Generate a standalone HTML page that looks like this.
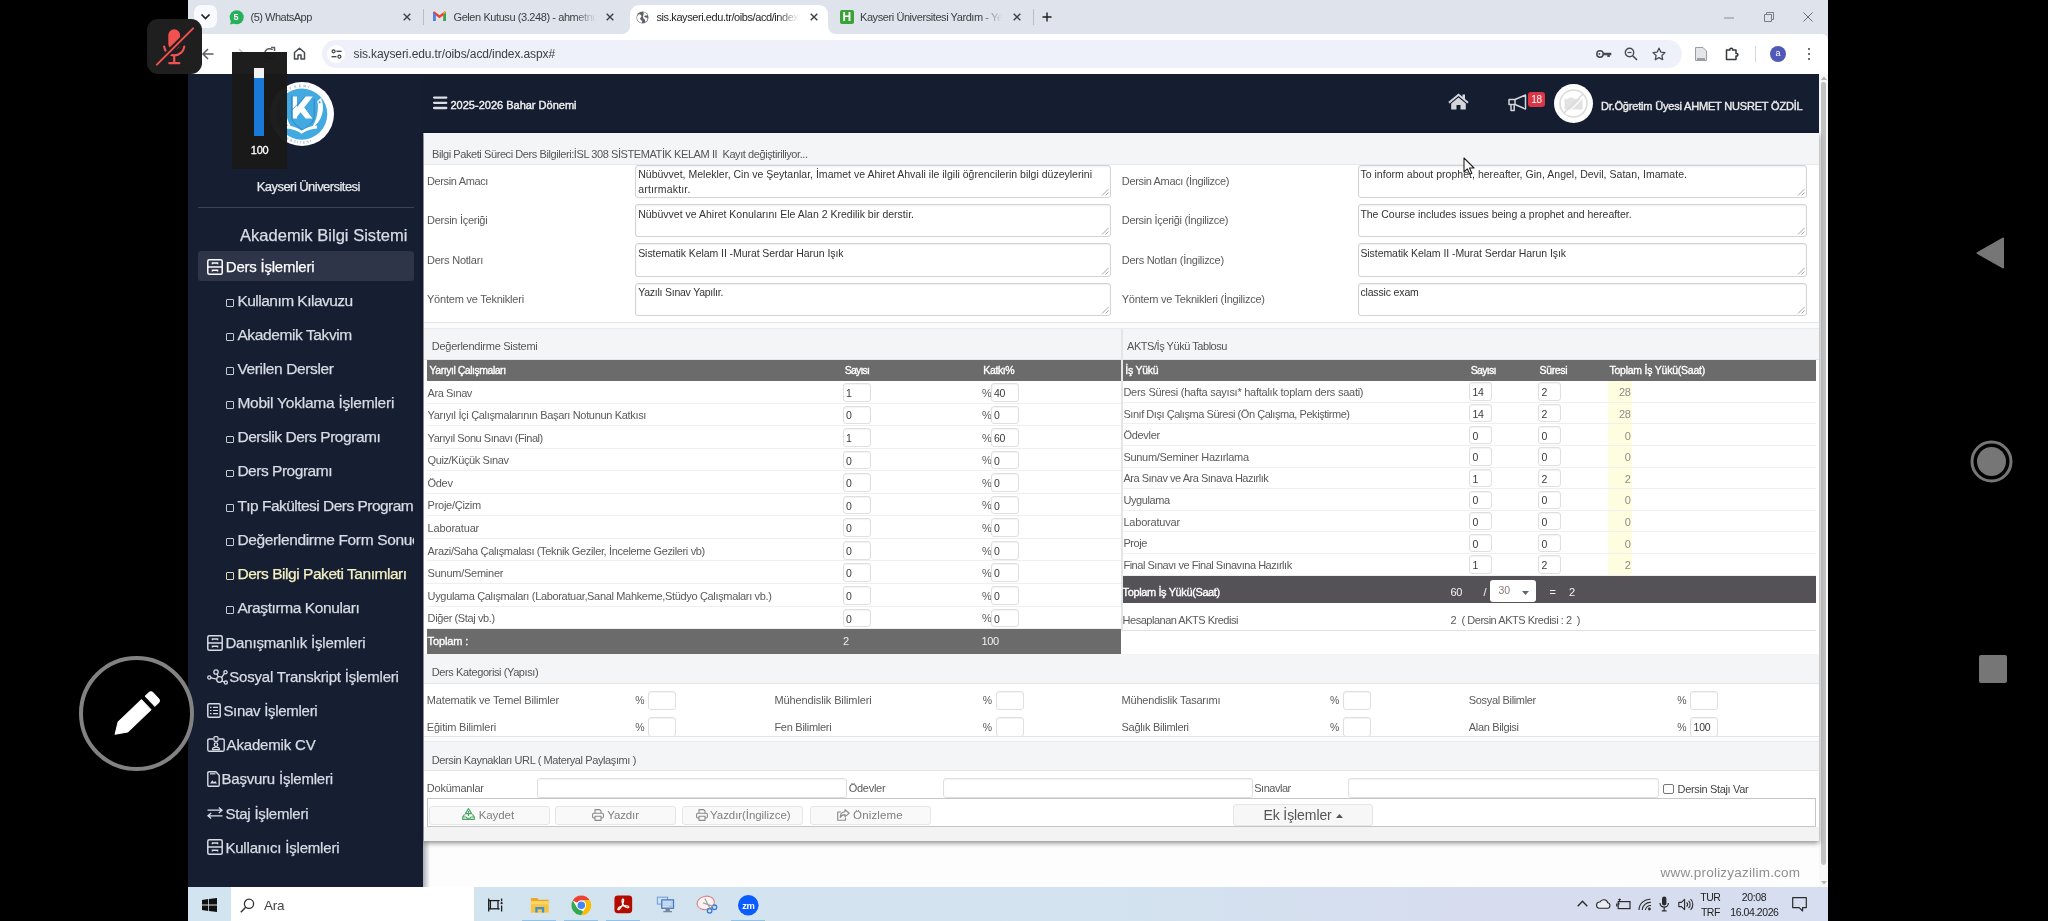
<!DOCTYPE html>
<html lang="tr"><head><meta charset="utf-8"><title>sis.kayseri.edu.tr/oibs/acd/index.aspx</title>
<style>
html,body{margin:0;padding:0;background:#000;}
body{width:2048px;height:921px;position:relative;overflow:hidden;font-family:'Liberation Sans',sans-serif;}
.t{position:absolute;white-space:pre;}
.sb{-webkit-text-stroke:0.25px currentColor;}
.b{position:absolute;box-sizing:border-box;}
svg{position:absolute;overflow:visible;}
.inp{position:absolute;box-sizing:border-box;background:#fff;border:1px solid #dfdfdf;border-radius:3px;box-shadow:inset 0 1px 1px rgba(0,0,0,.05);}
.ta{position:absolute;box-sizing:border-box;background:#fff;border:1px solid #d3d3d3;border-radius:3px;box-shadow:inset 0 1px 2px rgba(0,0,0,.07);}
.btn{position:absolute;box-sizing:border-box;background:#f9f9f9;border:1px solid #e6e6e6;border-radius:3px;}
#root{position:absolute;left:0;top:0;width:2048px;height:921px;will-change:transform;}
</style></head><body><div id="root">
<div class="b" style="left:188px;top:0px;width:1640px;height:44px;background:#dfe3ec;"></div><div class="b" style="left:188px;top:34px;width:1640px;height:40px;background:#ffffff;border-radius:0 6px 0 0;"></div><div class="b" style="left:194px;top:5px;width:23px;height:23px;background:#f9fafd;border-radius:7px;"></div><svg style="left:200px;top:12px" width="11" height="9" viewBox="0 0 11 9"><path d="M1.5 2.5 L5.5 6.5 L9.5 2.5" fill="none" stroke="#1f1f1f" stroke-width="1.7"/></svg><div class="b" style="left:630px;top:5px;width:198px;height:29.2px;background:#fff;border-radius:9px 9px 0 0;"></div><svg style="left:622px;top:26px" width="8" height="8" viewBox="0 0 8 8"><path d="M8 0 V8 H0 A8 8 0 0 0 8 0Z" fill="#fff"/></svg><svg style="left:828px;top:26px" width="8" height="8" viewBox="0 0 8 8"><path d="M0 0 V8 H8 A8 8 0 0 1 0 0Z" fill="#fff"/></svg><svg style="left:229px;top:10px" width="15" height="15" viewBox="0 0 15 15"><circle cx="7.7" cy="7.2" r="7" fill="#25b15a"/><path d="M1 14.6 L2.2 10.5 L5.2 13.5Z" fill="#25b15a"/></svg><span class="t" style="top:11.0px;font-size:9px;line-height:13px;color:#fff;font-weight:700;left:233.5px;">5</span><span class="t" style="top:10.0px;font-size:11px;line-height:15px;color:#3c4043;letter-spacing:-0.496px;left:250.5px;">(5) WhatsApp</span><svg style="left:403px;top:13px" width="8" height="8" viewBox="0 0 8 8"><path d="M0.7 0.7 L7.3 7.3 M7.3 0.7 L0.7 7.3" stroke="#3c4043" stroke-width="1.4" fill="none"/></svg><div class="b" style="left:423px;top:9px;width:1px;height:16px;background:#b9bdc7;"></div><svg style="left:433px;top:11px" width="13" height="11" viewBox="0 0 13 11"><path d="M0 1.2 V10 H2.6 V4.2 L6.5 7.2 L10.4 4.2 V10 H13 V1.2 L11.8 0.3 L6.5 4.3 L1.2 0.3Z" fill="#ea4335"/><path d="M0 1.2 V10 H2.6 V3.2Z" fill="#4285f4"/><path d="M13 1.2 V10 H10.4 V3.2Z" fill="#34a853"/><path d="M10.4 3.2 L13 1.2 L11.8 0.3 L10.4 1.4Z" fill="#fbbc04"/></svg><span class="t" style="top:10.0px;font-size:11px;line-height:15px;color:#3c4043;letter-spacing:-0.42px;left:453.5px;width:142px;overflow:hidden;-webkit-mask-image:linear-gradient(90deg,#000 85%,transparent);">Gelen Kutusu (3.248) - ahmetnu</span><svg style="left:606px;top:13px" width="8" height="8" viewBox="0 0 8 8"><path d="M0.7 0.7 L7.3 7.3 M7.3 0.7 L0.7 7.3" stroke="#3c4043" stroke-width="1.4" fill="none"/></svg><svg style="left:636px;top:11px" width="13" height="13" viewBox="0 0 13 13"><circle cx="6.5" cy="6.5" r="6" fill="#5f6368"/><path d="M2.5 3.5 C4 2.5 5.5 4 5.5 5.2 C5.5 6.5 3.8 6.5 4.2 8 C4.6 9.3 6 9 6.2 10.5 L5.5 12 C3.2 11.5 1.2 9.5 1 7 C1 5.5 1.6 4.3 2.5 3.5Z M7.5 1 C9.5 1.5 10.8 2.6 11.5 4.2 C10.5 4.8 9.2 4.2 8.5 4.8 C7.8 5.4 8.6 6.6 9.8 6.6 C10.6 6.6 11.4 7.2 11.6 8 C11.2 9.3 10.4 10.3 9.3 11 C8.8 10.2 9.3 9 8.5 8.3 C7.5 7.4 6.8 6.5 7 5.2 C7.2 4 8.2 3.2 7.5 1Z" fill="#fff"/></svg><span class="t" style="top:10.0px;font-size:11px;line-height:15px;color:#1f1f1f;letter-spacing:-0.42px;left:656.5px;width:142px;overflow:hidden;-webkit-mask-image:linear-gradient(90deg,#000 85%,transparent);">sis.kayseri.edu.tr/oibs/acd/indexa</span><svg style="left:810px;top:13px" width="8" height="8" viewBox="0 0 8 8"><path d="M0.7 0.7 L7.3 7.3 M7.3 0.7 L0.7 7.3" stroke="#3c4043" stroke-width="1.4" fill="none"/></svg><div class="b" style="left:840px;top:10px;width:14px;height:14px;background:#3aa335;border-radius:2px;"></div><span class="t" style="top:9.0px;font-size:12px;line-height:17px;color:#fff;font-weight:700;left:842.5px;">H</span><span class="t" style="top:10.0px;font-size:11px;line-height:15px;color:#3c4043;letter-spacing:-0.42px;left:860px;width:142px;overflow:hidden;-webkit-mask-image:linear-gradient(90deg,#000 85%,transparent);">Kayseri Üniversitesi Yardım - Yen</span><svg style="left:1013px;top:13px" width="8" height="8" viewBox="0 0 8 8"><path d="M0.7 0.7 L7.3 7.3 M7.3 0.7 L0.7 7.3" stroke="#3c4043" stroke-width="1.4" fill="none"/></svg><div class="b" style="left:1033px;top:9px;width:1px;height:16px;background:#b9bdc7;"></div><svg style="left:1042px;top:12px" width="10" height="10" viewBox="0 0 10 10"><path d="M5 0.5 V9.5 M0.5 5 H9.5" stroke="#1f1f1f" stroke-width="1.4"/></svg><svg style="left:1724px;top:17px" width="10" height="2" viewBox="0 0 10 2"><path d="M0 1 H10" stroke="#8a8d93" stroke-width="1"/></svg><svg style="left:1764px;top:12px" width="10" height="10" viewBox="0 0 10 10"><path d="M2.5 2.5 V0.5 H9.5 V7.5 H7.5 M0.5 2.5 H7.5 V9.5 H0.5Z" stroke="#7b7e85" stroke-width="1" fill="none"/></svg><svg style="left:1803px;top:12px" width="10" height="10" viewBox="0 0 10 10"><path d="M0.5 0.5 L9.5 9.5 M9.5 0.5 L0.5 9.5" stroke="#6b6e75" stroke-width="1"/></svg><svg style="left:202px;top:48px" width="12" height="12" viewBox="0 0 12 12"><path d="M11.5 6 H1.5 M6 1 L1 6 L6 11" stroke="#5a5d63" stroke-width="1.5" fill="none"/></svg><svg style="left:233px;top:48px" width="12" height="12" viewBox="0 0 12 12"><path d="M0.5 6 H10.5 M6 1 L11 6 L6 11" stroke="#c4c7cc" stroke-width="1.5" fill="none"/></svg><svg style="left:263px;top:47px" width="13" height="13" viewBox="0 0 13 13"><path d="M11.3 6.5 A4.8 4.8 0 1 1 9.6 2.8" stroke="#5a5d63" stroke-width="1.5" fill="none"/><path d="M8 0.5 H11.5 V4" stroke="#5a5d63" stroke-width="1.5" fill="none"/></svg><svg style="left:293px;top:47px" width="13" height="13" viewBox="0 0 13 13"><path d="M1.5 5.5 L6.5 1.2 L11.5 5.5 V12 H8 V8 H5 V12 H1.5Z" stroke="#474a50" stroke-width="1.5" fill="none" stroke-linejoin="round"/></svg><div class="b" style="left:322px;top:40px;width:1360px;height:28px;background:#eef1f9;border-radius:14px;"></div><div class="b" style="left:327px;top:45px;width:18px;height:18px;background:#fff;border-radius:9px;"></div><svg style="left:331px;top:49px" width="11" height="10" viewBox="0 0 11 10"><circle cx="2.6" cy="2.3" r="1.5" fill="none" stroke="#3c4043" stroke-width="1.2"/><path d="M5.5 2.3 H10.5" stroke="#3c4043" stroke-width="1.3"/><circle cx="8.4" cy="7.7" r="1.5" fill="none" stroke="#3c4043" stroke-width="1.2"/><path d="M0.5 7.7 H5.5" stroke="#3c4043" stroke-width="1.3"/></svg><span class="t" style="top:45.5px;font-size:12px;line-height:17px;color:#3c4043;letter-spacing:-0.1px;left:353.5px;">sis.kayseri.edu.tr/oibs/acd/index.aspx#</span><svg style="left:1596px;top:49px" width="16" height="10" viewBox="0 0 16 10"><circle cx="4" cy="5" r="3.2" fill="none" stroke="#474a50" stroke-width="1.5"/><circle cx="3.4" cy="5" r="0.9" fill="#474a50"/><path d="M7 3.8 H15.3 V6.2 H13.8 V8 H11.3 V6.2 H7Z" fill="#474a50"/></svg><svg style="left:1624px;top:47px" width="14" height="14" viewBox="0 0 14 14"><circle cx="5.5" cy="5.5" r="4.2" fill="none" stroke="#474a50" stroke-width="1.4"/><path d="M8.7 8.7 L13 13" stroke="#474a50" stroke-width="1.6"/><path d="M3.5 5.5 H7.5" stroke="#474a50" stroke-width="1.2"/></svg><svg style="left:1652px;top:47px" width="14" height="14" viewBox="0 0 14 14"><path d="M7 1.2 L8.8 5.1 L13 5.6 L9.9 8.5 L10.7 12.7 L7 10.6 L3.3 12.7 L4.1 8.5 L1 5.6 L5.2 5.1Z" fill="none" stroke="#474a50" stroke-width="1.3" stroke-linejoin="round"/></svg><svg style="left:1695px;top:47px" width="12" height="14" viewBox="0 0 12 14"><path d="M0.5 0.5 H8 L11.5 4 V13.5 H0.5Z" fill="#e4e5e7" stroke="#9a9da3" stroke-width="1"/><path d="M2 11 H10 V13 H2Z" fill="#9a9da3"/></svg><svg style="left:1725px;top:46px" width="15" height="15" viewBox="0 0 15 15"><path d="M1.5 4 H5 C4.2 1.5 8.3 1.5 7.5 4 H11 V7.5 C13.5 6.7 13.5 10.8 11 10 V13.5 H1.5Z" fill="none" stroke="#35383d" stroke-width="1.5" stroke-linejoin="round"/></svg><div class="b" style="left:1755px;top:46px;width:1px;height:16px;background:#d5d8de;"></div><div class="b" style="left:1770px;top:46px;width:16px;height:16px;background:#5059b8;border-radius:8px;"></div><span class="t" style="top:47.0px;font-size:9px;line-height:13px;color:#fff;left:1478px;width:600px;text-align:center;">a</span><div class="b" style="left:1807.5px;top:47.5px;width:2.6px;height:2.6px;background:#3c4043;border-radius:2px;"></div><div class="b" style="left:1807.5px;top:52.5px;width:2.6px;height:2.6px;background:#3c4043;border-radius:2px;"></div><div class="b" style="left:1807.5px;top:57.5px;width:2.6px;height:2.6px;background:#3c4043;border-radius:2px;"></div><div class="b" style="left:188px;top:74px;width:235px;height:813px;background:#161e32;"></div><div class="b" style="left:423px;top:74px;width:1396px;height:59px;background:#151d31;"></div><div class="b" style="left:423px;top:133px;width:1396px;height:754px;background:#fdfdfd;"></div><div class="b" style="left:1819px;top:74px;width:9px;height:813px;background:#f7f7f7;"></div><div class="b" style="left:1821.4px;top:82px;width:4.8px;height:782.5px;background:#c2c2c2;border-radius:2.4px;"></div><svg style="left:1820.5px;top:76px" width="6" height="4" viewBox="0 0 6 4"><path d="M0 4 L3 0.5 L6 4Z" fill="#b5b5b5"/></svg><svg style="left:1820.5px;top:880.5px" width="6" height="4" viewBox="0 0 6 4"><path d="M0 0 L3 3.5 L6 0Z" fill="#b5b5b5"/></svg><svg style="left:270px;top:82px" width="64" height="64" viewBox="270 82 64 64">
<circle cx="302" cy="114" r="32" fill="#fff"/>
<circle cx="301.7" cy="114.1" r="25.6" fill="#43a9e1"/>
<path d="M291.6 95.6 V116 C291.6 122 297 126.5 302.7 129.8 C308.4 126.5 314.2 122 314.2 116 V99" fill="none" stroke="#2f77b3" stroke-width="0.7"/>
<path d="M292.9 96.4 H297 V118.6 H292.9Z M305.5 96.4 H312.8 L297 116.8 V107.6Z M300.4 111.9 L304.2 107.4 L312.4 118.6 H305.6Z" fill="#fff"/>
<path d="M292 110 L305 96.4" stroke="#2f77b3" stroke-width="0.7"/>
<path d="M321 98 C325.5 108 322.5 122 311 128.5 C316.8 121 319 110 317.4 101Z M282.4 98 C277.9 108 280.9 122 292.4 128.5 C286.6 121 284.4 110 286 101Z" fill="#fff"/>
<circle cx="319.6" cy="102.2" r="1.5" fill="#43a9e1" stroke="#fff" stroke-width="0.9"/><circle cx="283.8" cy="102.2" r="1.5" fill="#43a9e1" stroke="#fff" stroke-width="0.9"/>
<path d="M286.6 125.6 C292 125.8 297 127.6 301.7 130.8 C306.4 127.6 311.4 125.8 316.8 125.6 L317.2 128.6 C311.4 128.8 306.4 130.6 301.7 133.8 C297 130.6 292 128.8 286.2 128.6Z" fill="#fff"/>
<path id="lgt" d="M275.2 114 A26.8 26.8 0 0 1 328.8 114" fill="none"/><path id="lgb" d="M272.4 114 A29.6 29.6 0 0 0 331.6 114" fill="none"/>
<text font-size="3.6" font-weight="700" fill="#8fb3cf" letter-spacing="2.2" font-family="Liberation Sans, sans-serif"><textPath href="#lgt" startOffset="24%">KAYSERİ</textPath></text>
<text font-size="3.4" font-weight="700" fill="#8fb3cf" letter-spacing="1.5" font-family="Liberation Sans, sans-serif"><textPath href="#lgb" startOffset="17%">ÜNİVERSİTESİ</textPath></text>
</svg><span class="t sb" style="top:178.0px;font-size:13px;line-height:18px;color:#e8e9ec;letter-spacing:-0.55px;left:8.300000000000011px;width:600px;text-align:center;">Kayseri Üniversitesi</span><div class="b" style="left:198px;top:207px;width:216px;height:1px;background:#3b4357;"></div><span class="t sb" style="top:223.5px;font-size:16.5px;line-height:23px;color:#d8dce4;letter-spacing:0.023px;left:240px;">Akademik Bilgi Sistemi</span><div class="b" style="left:198px;top:251px;width:216px;height:30px;background:#2e3548;border-radius:3px;"></div><svg style="left:207px;top:258.5px" width="16" height="16" viewBox="0 0 16 16"><rect x="0.8" y="0.8" width="14.4" height="14.4" rx="1.5" fill="none" stroke="#fff" stroke-width="1.5"/><path d="M0.8 8 H15.2" stroke="#fff" stroke-width="1.5"/><path d="M5.4 5.2 V4 H10.6 V5.2 M5.4 12.4 V11.2 H10.6 V12.4" stroke="#fff" stroke-width="1.4" fill="none"/></svg><span class="t sb" style="top:256.0px;font-size:15px;line-height:21px;color:#fff;letter-spacing:-0.221px;left:225.8px;">Ders İşlemleri</span><div class="b" style="left:226px;top:299.09999999999997px;width:8.3px;height:7.9px;border:1px solid #d8dce4;border-radius:1px;opacity:.9;"></div><span class="t sb" style="top:289.9px;font-size:15.5px;line-height:22px;color:#d8dce4;letter-spacing:-0.515px;left:237.4px;">Kullanım Kılavuzu</span><div class="b" style="left:226px;top:333.2px;width:8.3px;height:7.9px;border:1px solid #d8dce4;border-radius:1px;opacity:.9;"></div><span class="t sb" style="top:324.0px;font-size:15.5px;line-height:22px;color:#d8dce4;letter-spacing:-0.388px;left:237.4px;">Akademik Takvim</span><div class="b" style="left:226px;top:367.29999999999995px;width:8.3px;height:7.9px;border:1px solid #d8dce4;border-radius:1px;opacity:.9;"></div><span class="t sb" style="top:358.1px;font-size:15.5px;line-height:22px;color:#d8dce4;letter-spacing:-0.364px;left:237.4px;">Verilen Dersler</span><div class="b" style="left:226px;top:401.4px;width:8.3px;height:7.9px;border:1px solid #d8dce4;border-radius:1px;opacity:.9;"></div><span class="t sb" style="top:392.2px;font-size:15.5px;line-height:22px;color:#d8dce4;letter-spacing:-0.225px;left:237.4px;">Mobil Yoklama İşlemleri</span><div class="b" style="left:226px;top:435.49999999999994px;width:8.3px;height:7.9px;border:1px solid #d8dce4;border-radius:1px;opacity:.9;"></div><span class="t sb" style="top:426.3px;font-size:15.5px;line-height:22px;color:#d8dce4;letter-spacing:-0.45px;left:237.4px;">Derslik Ders Programı</span><div class="b" style="left:226px;top:469.59999999999997px;width:8.3px;height:7.9px;border:1px solid #d8dce4;border-radius:1px;opacity:.9;"></div><span class="t sb" style="top:460.4px;font-size:15.5px;line-height:22px;color:#d8dce4;letter-spacing:-0.475px;left:237.4px;">Ders Programı</span><div class="b" style="left:226px;top:503.7px;width:8.3px;height:7.9px;border:1px solid #d8dce4;border-radius:1px;opacity:.9;"></div><span class="t sb" style="top:494.5px;font-size:15.5px;line-height:22px;color:#d8dce4;letter-spacing:-0.527px;left:237.4px;width:176.2px;overflow:hidden;">Tıp Fakültesi Ders Programı</span><div class="b" style="left:226px;top:537.8000000000001px;width:8.3px;height:7.9px;border:1px solid #d8dce4;border-radius:1px;opacity:.9;"></div><span class="t sb" style="top:528.6px;font-size:15.5px;line-height:22px;color:#d8dce4;letter-spacing:-0.35px;left:237.4px;width:176.2px;overflow:hidden;">Değerlendirme Form Sonuçları</span><div class="b" style="left:226px;top:571.9000000000001px;width:8.3px;height:7.9px;border:1px solid #f4f1c4;border-radius:1px;opacity:.9;"></div><span class="t sb" style="top:562.7px;font-size:15.5px;line-height:22px;color:#f4f1c4;letter-spacing:-0.451px;left:237.4px;">Ders Bilgi Paketi Tanımları</span><div class="b" style="left:226px;top:606.0px;width:8.3px;height:7.9px;border:1px solid #d8dce4;border-radius:1px;opacity:.9;"></div><span class="t sb" style="top:596.8px;font-size:15.5px;line-height:22px;color:#d8dce4;letter-spacing:-0.407px;left:237.4px;">Araştırma Konuları</span><svg style="left:207px;top:634.5px" width="16" height="16" viewBox="0 0 16 16"><rect x="0.8" y="0.8" width="14.4" height="14.4" rx="1.5" fill="none" stroke="#d8dce4" stroke-width="1.5"/><path d="M0.8 8 H15.2" stroke="#d8dce4" stroke-width="1.5"/><path d="M5.4 5.2 V4 H10.6 V5.2 M5.4 12.4 V11.2 H10.6 V12.4" stroke="#d8dce4" stroke-width="1.4" fill="none"/></svg><span class="t sb" style="top:632.0px;font-size:15px;line-height:21px;color:#d8dce4;letter-spacing:-0.161px;left:225.4px;">Danışmanlık İşlemleri</span><svg style="left:207px;top:668.6px" width="21" height="16" viewBox="0 0 21 16"><g fill="none" stroke="#d8dce4" stroke-width="1.3"><circle cx="2.3" cy="8.5" r="1.6"/><circle cx="9" cy="3" r="2.2"/><circle cx="12.5" cy="10.5" r="2.8"/><circle cx="18.5" cy="3.2" r="1.6"/><circle cx="18.8" cy="13.6" r="1.6"/><path d="M3.9 8.8 L9.7 10.1 M9.9 5 L11.4 8 M14.6 8.6 L17.4 4.4 M15 12 L17.4 13"/></g></svg><span class="t sb" style="top:666.1px;font-size:15px;line-height:21px;color:#d8dce4;letter-spacing:-0.21px;left:229.3px;">Sosyal Transkript İşlemleri</span><svg style="left:207px;top:703.2px" width="14" height="15" viewBox="0 0 14 15"><rect x="0.8" y="0.8" width="12.4" height="13.4" rx="1.3" fill="none" stroke="#d8dce4" stroke-width="1.5"/><path d="M3 4.3 H4.5 M6 4.3 H11 M3 7.5 H4.5 M6 7.5 H11 M3 10.7 H4.5 M6 10.7 H11" stroke="#d8dce4" stroke-width="1.2"/></svg><span class="t sb" style="top:700.2px;font-size:15px;line-height:21px;color:#d8dce4;letter-spacing:-0.292px;left:223.4px;">Sınav İşlemleri</span><svg style="left:207px;top:736.3px" width="18" height="16" viewBox="0 0 18 16"><path d="M6.5 3 H2.2 Q0.8 3 0.8 4.4 V13.8 Q0.8 15.2 2.2 15.2 H15.8 Q17.2 15.2 17.2 13.8 V4.4 Q17.2 3 15.8 3 H11.5" fill="none" stroke="#d8dce4" stroke-width="1.4"/><rect x="7" y="0.7" width="4" height="4.6" rx="1" fill="none" stroke="#d8dce4" stroke-width="1.2"/><circle cx="9" cy="8.6" r="1.8" fill="none" stroke="#d8dce4" stroke-width="1.2"/><path d="M5.5 13.6 Q5.5 11.2 9 11.2 Q12.5 11.2 12.5 13.6Z" fill="none" stroke="#d8dce4" stroke-width="1.2"/></svg><span class="t sb" style="top:734.3px;font-size:15px;line-height:21px;color:#d8dce4;letter-spacing:-0.17px;left:226.6px;">Akademik CV</span><svg style="left:207px;top:770.9px" width="13" height="16" viewBox="0 0 13 16"><path d="M2 0.8 H8.8 L12.2 4.2 V14 Q12.2 15.2 11 15.2 H2 Q0.8 15.2 0.8 14 V2 Q0.8 0.8 2 0.8Z" fill="none" stroke="#d8dce4" stroke-width="1.4"/><path d="M3 2.8 H8.5" stroke="#d8dce4" stroke-width="1.2"/><path d="M3 12.5 L5.3 9.3 L6.9 11.2 L8.2 10 L10 12.5Z" fill="#d8dce4"/></svg><span class="t sb" style="top:768.4px;font-size:15px;line-height:21px;color:#d8dce4;letter-spacing:-0.22px;left:221.5px;">Başvuru İşlemleri</span><svg style="left:207px;top:807.0px" width="16" height="12" viewBox="0 0 16 12"><path d="M0.5 3.2 H15 M11.8 0.5 L15 3.2 L11.8 5.9 M15.5 8.8 H1 M4.2 6.1 L1 8.8 L4.2 11.5" fill="none" stroke="#d8dce4" stroke-width="1.3"/></svg><span class="t sb" style="top:802.5px;font-size:15px;line-height:21px;color:#d8dce4;letter-spacing:-0.204px;left:225.4px;">Staj İşlemleri</span><svg style="left:207px;top:839.1px" width="16" height="16" viewBox="0 0 16 16"><rect x="0.8" y="0.8" width="14.4" height="14.4" rx="1.5" fill="none" stroke="#d8dce4" stroke-width="1.5"/><path d="M0.8 8 H15.2" stroke="#d8dce4" stroke-width="1.5"/><path d="M5.4 5.2 V4 H10.6 V5.2 M5.4 12.4 V11.2 H10.6 V12.4" stroke="#d8dce4" stroke-width="1.4" fill="none"/></svg><span class="t sb" style="top:836.6px;font-size:15px;line-height:21px;color:#d8dce4;letter-spacing:-0.187px;left:225.4px;">Kullanıcı İşlemleri</span><div class="b" style="left:423px;top:133px;width:7px;height:754px;background:linear-gradient(90deg,rgba(20,27,45,.35),rgba(20,27,45,0));"></div><svg style="left:433px;top:96.4px" width="14.4" height="13.6" viewBox="0 0 14.4 13.6"><path d="M1.1 1.6 H13.3 M1.1 6.8 H13.3 M1.1 12 H13.3" stroke="#dcdfe6" stroke-width="2.3" stroke-linecap="round"/></svg><span class="t" style="top:98.0px;font-size:11px;line-height:15px;color:#f0f0f0;letter-spacing:0.001px;left:450.5px;-webkit-text-stroke:0.4px #f0f0f0;">2025-2026 Bahar Dönemi</span><svg style="left:1448px;top:93px" width="21" height="17" viewBox="0 0 21 17"><path d="M10.5 0.5 L0.3 9 L1.6 10.4 L10.5 3 L19.4 10.4 L20.7 9 L17 5.9 V1.5 H14.5 V3.8Z" fill="#d4d6dc"/><path d="M10.5 4.4 L3.2 10.5 V16.5 H8.5 V12 H12.5 V16.5 H17.8 V10.5Z" fill="#d4d6dc"/></svg><svg style="left:1508px;top:94px" width="20" height="18" viewBox="0 0 20 18"><g fill="none" stroke="#d4d6dc" stroke-width="1.5" stroke-linejoin="round"><path d="M1 5.5 H7 L17.5 1 V15 L7 10.5 H1Z"/><path d="M3 10.5 V16.5 H6.2 V10.5"/><path d="M7 5.5 V10.5"/></g></svg><div class="b" style="left:1528px;top:92px;width:17px;height:15px;background:#dc3545;border-radius:3px;"></div><span class="t" style="top:92.5px;font-size:10px;line-height:14px;color:#fff;letter-spacing:-0.3px;left:1236.5px;width:600px;text-align:center;">18</span><svg style="left:1554px;top:83.5px" width="39" height="39" viewBox="0 0 39 39"><circle cx="19.5" cy="19.5" r="19.5" fill="#fff"/><circle cx="19.5" cy="19.5" r="13.5" fill="#fff" stroke="#dcdcdc" stroke-width="1.6"/><path d="M10.5 15 H14 L15 13.5 H19 L20 15 H28.5 V25.5 H10.5Z" fill="#e2e2e2"/><path d="M10 29 L29 10" stroke="#dcdcdc" stroke-width="1.6"/><path d="M10.5 29 L28 11.5" stroke="#fff" stroke-width="1.2" transform="translate(1.6,1.6)"/></svg><span class="t" style="top:98.5px;font-size:11px;line-height:15px;color:#ececec;letter-spacing:-0.187px;left:1601px;-webkit-text-stroke:0.4px #ececec;">Dr.Öğretim Üyesi AHMET NUSRET ÖZDİL</span><div class="b" style="left:424px;top:133px;width:1394.5px;height:708px;background:#f3f3f4;box-shadow:0 2px 5px rgba(0,0,0,.45);"></div><div class="b" style="left:424px;top:133px;width:1394.5px;height:694px;background:#fff;"></div><div class="b" style="left:424px;top:133px;width:1394.5px;height:31.5px;background:#f4f5f7;border-bottom:1px solid #e9eaec;"></div><span class="t" style="top:146.5px;font-size:11px;line-height:15px;color:#555;letter-spacing:-0.419px;left:432px;">Bilgi Paketi Süreci Ders Bilgileri:İSL 308 SİSTEMATİK KELAM II  Kayıt değiştiriliyor...</span><span class="t" style="top:174.0px;font-size:11px;line-height:15px;color:#5a5a5a;letter-spacing:-0.368px;left:427px;">Dersin Amacı</span><div class="ta" style="left:635.4px;top:164.7px;width:476px;height:33.3px;"><svg style="right:1px;bottom:1px" width="8" height="8" viewBox="0 0 8 8"><path d="M7.5 1 L1 7.5 M7.5 4.5 L4.5 7.5" stroke="#9a9a9a" stroke-width="0.9"/></svg></div><span class="t" style="top:167.4px;font-size:10.5px;line-height:15px;color:#333;letter-spacing:0.009px;left:638.1999999999999px;">Nübüvvet, Melekler, Cin ve Şeytanlar, İmamet ve Ahiret Ahvali ile ilgili öğrencilerin bilgi düzeylerini</span><span class="t" style="top:182.4px;font-size:10.5px;line-height:15px;color:#333;letter-spacing:0.184px;left:638.1999999999999px;">artırmaktır.</span><span class="t" style="top:174.0px;font-size:11px;line-height:15px;color:#5a5a5a;letter-spacing:-0.348px;left:1121.8px;">Dersin Amacı (İngilizce)</span><div class="ta" style="left:1357.6px;top:164.7px;width:449px;height:33.3px;"><svg style="right:1px;bottom:1px" width="8" height="8" viewBox="0 0 8 8"><path d="M7.5 1 L1 7.5 M7.5 4.5 L4.5 7.5" stroke="#9a9a9a" stroke-width="0.9"/></svg></div><span class="t" style="top:167.4px;font-size:10.5px;line-height:15px;color:#333;letter-spacing:0.03px;left:1360.3999999999999px;">To inform about prophet, hereafter, Gin, Angel, Devil, Satan, Imamate.</span><span class="t" style="top:213.3px;font-size:11px;line-height:15px;color:#5a5a5a;letter-spacing:-0.271px;left:427px;">Dersin İçeriği</span><div class="ta" style="left:635.4px;top:204.0px;width:476px;height:33.3px;"><svg style="right:1px;bottom:1px" width="8" height="8" viewBox="0 0 8 8"><path d="M7.5 1 L1 7.5 M7.5 4.5 L4.5 7.5" stroke="#9a9a9a" stroke-width="0.9"/></svg></div><span class="t" style="top:206.7px;font-size:10.5px;line-height:15px;color:#333;letter-spacing:0.005px;left:638.1999999999999px;">Nübüvvet ve Ahiret Konularını Ele Alan 2 Kredilik bir derstir.</span><span class="t" style="top:213.3px;font-size:11px;line-height:15px;color:#5a5a5a;letter-spacing:-0.308px;left:1121.8px;">Dersin İçeriği (İngilizce)</span><div class="ta" style="left:1357.6px;top:204.0px;width:449px;height:33.3px;"><svg style="right:1px;bottom:1px" width="8" height="8" viewBox="0 0 8 8"><path d="M7.5 1 L1 7.5 M7.5 4.5 L4.5 7.5" stroke="#9a9a9a" stroke-width="0.9"/></svg></div><span class="t" style="top:206.7px;font-size:10.5px;line-height:15px;color:#333;letter-spacing:-0.024px;left:1360.3999999999999px;">The Course includes issues being a prophet and hereafter.</span><span class="t" style="top:252.7px;font-size:11px;line-height:15px;color:#5a5a5a;letter-spacing:-0.224px;left:427px;">Ders Notları</span><div class="ta" style="left:635.4px;top:243.4px;width:476px;height:33.3px;"><svg style="right:1px;bottom:1px" width="8" height="8" viewBox="0 0 8 8"><path d="M7.5 1 L1 7.5 M7.5 4.5 L4.5 7.5" stroke="#9a9a9a" stroke-width="0.9"/></svg></div><span class="t" style="top:246.1px;font-size:10.5px;line-height:15px;color:#333;letter-spacing:-0.069px;left:638.1999999999999px;">Sistematik Kelam II -Murat Serdar Harun Işık</span><span class="t" style="top:252.7px;font-size:11px;line-height:15px;color:#5a5a5a;letter-spacing:-0.284px;left:1121.8px;">Ders Notları (İngilizce)</span><div class="ta" style="left:1357.6px;top:243.4px;width:449px;height:33.3px;"><svg style="right:1px;bottom:1px" width="8" height="8" viewBox="0 0 8 8"><path d="M7.5 1 L1 7.5 M7.5 4.5 L4.5 7.5" stroke="#9a9a9a" stroke-width="0.9"/></svg></div><span class="t" style="top:246.1px;font-size:10.5px;line-height:15px;color:#333;letter-spacing:-0.06px;left:1360.3999999999999px;">Sistematik Kelam II -Murat Serdar Harun Işık</span><span class="t" style="top:292.0px;font-size:11px;line-height:15px;color:#5a5a5a;letter-spacing:-0.22px;left:427px;">Yöntem ve Teknikleri</span><div class="ta" style="left:635.4px;top:282.7px;width:476px;height:33.3px;"><svg style="right:1px;bottom:1px" width="8" height="8" viewBox="0 0 8 8"><path d="M7.5 1 L1 7.5 M7.5 4.5 L4.5 7.5" stroke="#9a9a9a" stroke-width="0.9"/></svg></div><span class="t" style="top:285.4px;font-size:10.5px;line-height:15px;color:#333;letter-spacing:-0.233px;left:638.1999999999999px;">Yazılı Sınav Yapılır.</span><span class="t" style="top:292.0px;font-size:11px;line-height:15px;color:#5a5a5a;letter-spacing:-0.266px;left:1121.8px;">Yöntem ve Teknikleri (İngilizce)</span><div class="ta" style="left:1357.6px;top:282.7px;width:449px;height:33.3px;"><svg style="right:1px;bottom:1px" width="8" height="8" viewBox="0 0 8 8"><path d="M7.5 1 L1 7.5 M7.5 4.5 L4.5 7.5" stroke="#9a9a9a" stroke-width="0.9"/></svg></div><span class="t" style="top:285.4px;font-size:10.5px;line-height:15px;color:#333;letter-spacing:-0.151px;left:1360.3999999999999px;">classic exam</span><div class="b" style="left:424px;top:321.5px;width:1394.5px;height:7px;background:#fbfbfc;border-top:1px solid #e4e5e7;border-bottom:1px solid #e9eaec;"></div><div class="b" style="left:424px;top:328.5px;width:698px;height:31px;background:#f4f5f7;border-bottom:1px solid #e6e7e9;"></div><span class="t" style="top:338.7px;font-size:11px;line-height:15px;color:#555;letter-spacing:-0.265px;left:431.8px;">Değerlendirme Sistemi</span><div class="b" style="left:1122px;top:328.5px;width:696.5px;height:31px;background:#f4f5f7;border-bottom:1px solid #e6e7e9;"></div><span class="t" style="top:338.7px;font-size:11px;line-height:15px;color:#555;letter-spacing:-0.452px;left:1127px;">AKTS/İş Yükü Tablosu</span><div class="b" style="left:1121px;top:328.5px;width:1.5px;height:302px;background:#e4e5e7;"></div><div class="b" style="left:427px;top:360.4px;width:693.5999999999999px;height:20.2px;background:#6b6b6b;"></div><span class="t" style="top:363.3px;font-size:10.5px;line-height:15px;color:#fff;letter-spacing:-0.474px;left:429.6px;-webkit-text-stroke:0.35px #fff;">Yarıyıl Çalışmaları</span><span class="t" style="top:363.3px;font-size:10.5px;line-height:15px;color:#fff;letter-spacing:-0.781px;left:844.7px;-webkit-text-stroke:0.35px #fff;">Sayısı</span><span class="t" style="top:363.3px;font-size:10.5px;line-height:15px;color:#fff;letter-spacing:-0.378px;left:983.3px;-webkit-text-stroke:0.35px #fff;">Katkı%</span><div class="b" style="left:427px;top:402.56px;width:693.5999999999999px;height:1px;background:#efefef;"></div><span class="t" style="top:385.6px;font-size:11px;line-height:15px;color:#5a5a5a;letter-spacing:-0.446px;left:427.6px;">Ara Sınav</span><div class="inp" style="left:842.6px;top:382.9px;width:28px;height:18.8px;"></div><span class="t" style="top:385.9px;font-size:10.5px;line-height:15px;color:#3a3a3a;letter-spacing:-0.2px;left:846px;">1</span><span class="t" style="top:385.6px;font-size:11px;line-height:15px;color:#5a5a5a;letter-spacing:-0.5px;left:982px;">%</span><div class="inp" style="left:991.4px;top:382.9px;width:28px;height:18.8px;"></div><span class="t" style="top:385.9px;font-size:10.5px;line-height:15px;color:#3a3a3a;letter-spacing:-0.4px;left:994px;">40</span><div class="b" style="left:427px;top:425.12px;width:693.5999999999999px;height:1px;background:#efefef;"></div><span class="t" style="top:408.1px;font-size:11px;line-height:15px;color:#5a5a5a;letter-spacing:-0.328px;left:427.6px;">Yarıyıl İçi Çalışmalarının Başarı Notunun Katkısı</span><div class="inp" style="left:842.6px;top:405.5px;width:28px;height:18.8px;"></div><span class="t" style="top:408.4px;font-size:10.5px;line-height:15px;color:#3a3a3a;letter-spacing:-0.2px;left:846px;">0</span><span class="t" style="top:408.1px;font-size:11px;line-height:15px;color:#5a5a5a;letter-spacing:-0.5px;left:982px;">%</span><div class="inp" style="left:991.4px;top:405.5px;width:28px;height:18.8px;"></div><span class="t" style="top:408.4px;font-size:10.5px;line-height:15px;color:#3a3a3a;letter-spacing:-0.4px;left:994px;">0</span><div class="b" style="left:427px;top:447.68px;width:693.5999999999999px;height:1px;background:#efefef;"></div><span class="t" style="top:430.7px;font-size:11px;line-height:15px;color:#5a5a5a;letter-spacing:-0.458px;left:427.6px;">Yarıyıl Sonu Sınavı (Final)</span><div class="inp" style="left:842.6px;top:428.0px;width:28px;height:18.8px;"></div><span class="t" style="top:431.0px;font-size:10.5px;line-height:15px;color:#3a3a3a;letter-spacing:-0.2px;left:846px;">1</span><span class="t" style="top:430.7px;font-size:11px;line-height:15px;color:#5a5a5a;letter-spacing:-0.5px;left:982px;">%</span><div class="inp" style="left:991.4px;top:428.0px;width:28px;height:18.8px;"></div><span class="t" style="top:431.0px;font-size:10.5px;line-height:15px;color:#3a3a3a;letter-spacing:-0.4px;left:994px;">60</span><div class="b" style="left:427px;top:470.24px;width:693.5999999999999px;height:1px;background:#efefef;"></div><span class="t" style="top:453.3px;font-size:11px;line-height:15px;color:#5a5a5a;letter-spacing:-0.402px;left:427.6px;">Quiz/Küçük Sınav</span><div class="inp" style="left:842.6px;top:450.6px;width:28px;height:18.8px;"></div><span class="t" style="top:453.6px;font-size:10.5px;line-height:15px;color:#3a3a3a;letter-spacing:-0.2px;left:846px;">0</span><span class="t" style="top:453.3px;font-size:11px;line-height:15px;color:#5a5a5a;letter-spacing:-0.5px;left:982px;">%</span><div class="inp" style="left:991.4px;top:450.6px;width:28px;height:18.8px;"></div><span class="t" style="top:453.6px;font-size:10.5px;line-height:15px;color:#3a3a3a;letter-spacing:-0.4px;left:994px;">0</span><div class="b" style="left:427px;top:492.8px;width:693.5999999999999px;height:1px;background:#efefef;"></div><span class="t" style="top:475.8px;font-size:11px;line-height:15px;color:#5a5a5a;letter-spacing:-0.324px;left:427.6px;">Ödev</span><div class="inp" style="left:842.6px;top:473.1px;width:28px;height:18.8px;"></div><span class="t" style="top:476.1px;font-size:10.5px;line-height:15px;color:#3a3a3a;letter-spacing:-0.2px;left:846px;">0</span><span class="t" style="top:475.8px;font-size:11px;line-height:15px;color:#5a5a5a;letter-spacing:-0.5px;left:982px;">%</span><div class="inp" style="left:991.4px;top:473.1px;width:28px;height:18.8px;"></div><span class="t" style="top:476.1px;font-size:10.5px;line-height:15px;color:#3a3a3a;letter-spacing:-0.4px;left:994px;">0</span><div class="b" style="left:427px;top:515.36px;width:693.5999999999999px;height:1px;background:#efefef;"></div><span class="t" style="top:498.4px;font-size:11px;line-height:15px;color:#5a5a5a;letter-spacing:-0.267px;left:427.6px;">Proje/Çizim</span><div class="inp" style="left:842.6px;top:495.7px;width:28px;height:18.8px;"></div><span class="t" style="top:498.7px;font-size:10.5px;line-height:15px;color:#3a3a3a;letter-spacing:-0.2px;left:846px;">0</span><span class="t" style="top:498.4px;font-size:11px;line-height:15px;color:#5a5a5a;letter-spacing:-0.5px;left:982px;">%</span><div class="inp" style="left:991.4px;top:495.7px;width:28px;height:18.8px;"></div><span class="t" style="top:498.7px;font-size:10.5px;line-height:15px;color:#3a3a3a;letter-spacing:-0.4px;left:994px;">0</span><div class="b" style="left:427px;top:537.92px;width:693.5999999999999px;height:1px;background:#efefef;"></div><span class="t" style="top:520.9px;font-size:11px;line-height:15px;color:#5a5a5a;letter-spacing:-0.172px;left:427.6px;">Laboratuar</span><div class="inp" style="left:842.6px;top:518.3px;width:28px;height:18.8px;"></div><span class="t" style="top:521.2px;font-size:10.5px;line-height:15px;color:#3a3a3a;letter-spacing:-0.2px;left:846px;">0</span><span class="t" style="top:520.9px;font-size:11px;line-height:15px;color:#5a5a5a;letter-spacing:-0.5px;left:982px;">%</span><div class="inp" style="left:991.4px;top:518.3px;width:28px;height:18.8px;"></div><span class="t" style="top:521.2px;font-size:10.5px;line-height:15px;color:#3a3a3a;letter-spacing:-0.4px;left:994px;">0</span><div class="b" style="left:427px;top:560.4799999999999px;width:693.5999999999999px;height:1px;background:#efefef;"></div><span class="t" style="top:543.5px;font-size:11px;line-height:15px;color:#5a5a5a;letter-spacing:-0.355px;left:427.6px;">Arazi/Saha Çalışmalası (Teknik Geziler, İnceleme Gezileri vb)</span><div class="inp" style="left:842.6px;top:540.8px;width:28px;height:18.8px;"></div><span class="t" style="top:543.8px;font-size:10.5px;line-height:15px;color:#3a3a3a;letter-spacing:-0.2px;left:846px;">0</span><span class="t" style="top:543.5px;font-size:11px;line-height:15px;color:#5a5a5a;letter-spacing:-0.5px;left:982px;">%</span><div class="inp" style="left:991.4px;top:540.8px;width:28px;height:18.8px;"></div><span class="t" style="top:543.8px;font-size:10.5px;line-height:15px;color:#3a3a3a;letter-spacing:-0.4px;left:994px;">0</span><div class="b" style="left:427px;top:583.04px;width:693.5999999999999px;height:1px;background:#efefef;"></div><span class="t" style="top:566.1px;font-size:11px;line-height:15px;color:#5a5a5a;letter-spacing:-0.252px;left:427.6px;">Sunum/Seminer</span><div class="inp" style="left:842.6px;top:563.4px;width:28px;height:18.8px;"></div><span class="t" style="top:566.4px;font-size:10.5px;line-height:15px;color:#3a3a3a;letter-spacing:-0.2px;left:846px;">0</span><span class="t" style="top:566.1px;font-size:11px;line-height:15px;color:#5a5a5a;letter-spacing:-0.5px;left:982px;">%</span><div class="inp" style="left:991.4px;top:563.4px;width:28px;height:18.8px;"></div><span class="t" style="top:566.4px;font-size:10.5px;line-height:15px;color:#3a3a3a;letter-spacing:-0.4px;left:994px;">0</span><div class="b" style="left:427px;top:605.5999999999999px;width:693.5999999999999px;height:1px;background:#efefef;"></div><span class="t" style="top:588.6px;font-size:11px;line-height:15px;color:#5a5a5a;letter-spacing:-0.335px;left:427.6px;">Uygulama Çalışmaları (Laboratuar,Sanal Mahkeme,Stüdyo Çalışmaları vb.)</span><div class="inp" style="left:842.6px;top:585.9px;width:28px;height:18.8px;"></div><span class="t" style="top:588.9px;font-size:10.5px;line-height:15px;color:#3a3a3a;letter-spacing:-0.2px;left:846px;">0</span><span class="t" style="top:588.6px;font-size:11px;line-height:15px;color:#5a5a5a;letter-spacing:-0.5px;left:982px;">%</span><div class="inp" style="left:991.4px;top:585.9px;width:28px;height:18.8px;"></div><span class="t" style="top:588.9px;font-size:10.5px;line-height:15px;color:#3a3a3a;letter-spacing:-0.4px;left:994px;">0</span><div class="b" style="left:427px;top:628.16px;width:693.5999999999999px;height:1px;background:#efefef;"></div><span class="t" style="top:611.2px;font-size:11px;line-height:15px;color:#5a5a5a;letter-spacing:-0.391px;left:427.6px;">Diğer (Staj vb.)</span><div class="inp" style="left:842.6px;top:608.5px;width:28px;height:18.8px;"></div><span class="t" style="top:611.5px;font-size:10.5px;line-height:15px;color:#3a3a3a;letter-spacing:-0.2px;left:846px;">0</span><span class="t" style="top:611.2px;font-size:11px;line-height:15px;color:#5a5a5a;letter-spacing:-0.5px;left:982px;">%</span><div class="inp" style="left:991.4px;top:608.5px;width:28px;height:18.8px;"></div><span class="t" style="top:611.5px;font-size:10.5px;line-height:15px;color:#3a3a3a;letter-spacing:-0.4px;left:994px;">0</span><div class="b" style="left:427px;top:628.6px;width:693.5999999999999px;height:25px;background:#6b6b6b;"></div><span class="t" style="top:634.0px;font-size:11px;line-height:15px;color:#fff;letter-spacing:-0.122px;left:427.6px;-webkit-text-stroke:0.35px #fff;">Toplam :</span><span class="t" style="top:634.0px;font-size:11px;line-height:15px;color:#f0f0f0;letter-spacing:-0.36px;left:843px;">2</span><span class="t" style="top:634.0px;font-size:11px;line-height:15px;color:#f0f0f0;letter-spacing:-0.36px;left:981.6px;">100</span><div class="b" style="left:1122.6px;top:360.4px;width:693.8000000000002px;height:20.2px;background:#6b6b6b;"></div><span class="t" style="top:363.3px;font-size:10.5px;line-height:15px;color:#fff;letter-spacing:-0.261px;left:1125.3px;-webkit-text-stroke:0.35px #fff;">İş Yükü</span><span class="t" style="top:363.3px;font-size:10.5px;line-height:15px;color:#fff;letter-spacing:-0.715px;left:1470.8px;-webkit-text-stroke:0.35px #fff;">Sayısı</span><span class="t" style="top:363.3px;font-size:10.5px;line-height:15px;color:#fff;letter-spacing:-0.344px;left:1539.5px;-webkit-text-stroke:0.35px #fff;">Süresi</span><span class="t" style="top:363.3px;font-size:10.5px;line-height:15px;color:#fff;letter-spacing:-0.229px;left:1609.4px;-webkit-text-stroke:0.35px #fff;">Toplam İş Yükü(Saat)</span><div class="b" style="left:1122.6px;top:401.72px;width:693.8000000000002px;height:1px;background:#efefef;"></div><span class="t" style="top:384.9px;font-size:11px;line-height:15px;color:#5a5a5a;letter-spacing:-0.256px;left:1123.4px;">Ders Süresi (hafta sayısı* haftalık toplam ders saati)</span><div class="inp" style="left:1469px;top:382.4px;width:23px;height:18.4px;"></div><span class="t" style="top:385.2px;font-size:10.5px;line-height:15px;color:#3a3a3a;letter-spacing:-0.3px;left:1472.4px;">14</span><div class="inp" style="left:1538.2px;top:382.4px;width:23px;height:18.4px;"></div><span class="t" style="top:385.2px;font-size:10.5px;line-height:15px;color:#3a3a3a;letter-spacing:-0.3px;left:1541.6px;">2</span><div class="b" style="left:1607.5px;top:381.1px;width:24px;height:20.62px;background:#fefde0;"></div><span class="t" style="top:385.2px;font-size:11px;line-height:15px;color:#8c8c8c;letter-spacing:-0.4px;right:417.5999999999999px;">28</span><div class="b" style="left:1122.6px;top:423.34000000000003px;width:693.8000000000002px;height:1px;background:#efefef;"></div><span class="t" style="top:406.5px;font-size:11px;line-height:15px;color:#5a5a5a;letter-spacing:-0.452px;left:1123.4px;">Sınıf Dışı Çalışma Süresi (Ön Çalışma, Pekiştirme)</span><div class="inp" style="left:1469px;top:404.0px;width:23px;height:18.4px;"></div><span class="t" style="top:406.8px;font-size:10.5px;line-height:15px;color:#3a3a3a;letter-spacing:-0.3px;left:1472.4px;">14</span><div class="inp" style="left:1538.2px;top:404.0px;width:23px;height:18.4px;"></div><span class="t" style="top:406.8px;font-size:10.5px;line-height:15px;color:#3a3a3a;letter-spacing:-0.3px;left:1541.6px;">2</span><div class="b" style="left:1607.5px;top:402.72px;width:24px;height:20.62px;background:#fefde0;"></div><span class="t" style="top:406.8px;font-size:11px;line-height:15px;color:#8c8c8c;letter-spacing:-0.4px;right:417.5999999999999px;">28</span><div class="b" style="left:1122.6px;top:444.96000000000004px;width:693.8000000000002px;height:1px;background:#efefef;"></div><span class="t" style="top:428.2px;font-size:11px;line-height:15px;color:#5a5a5a;letter-spacing:-0.276px;left:1123.4px;">Ödevler</span><div class="inp" style="left:1469px;top:425.6px;width:23px;height:18.4px;"></div><span class="t" style="top:428.5px;font-size:10.5px;line-height:15px;color:#3a3a3a;letter-spacing:-0.3px;left:1472.4px;">0</span><div class="inp" style="left:1538.2px;top:425.6px;width:23px;height:18.4px;"></div><span class="t" style="top:428.5px;font-size:10.5px;line-height:15px;color:#3a3a3a;letter-spacing:-0.3px;left:1541.6px;">0</span><div class="b" style="left:1607.5px;top:424.34000000000003px;width:24px;height:20.62px;background:#fefde0;"></div><span class="t" style="top:428.5px;font-size:11px;line-height:15px;color:#8c8c8c;letter-spacing:-0.4px;right:417.5999999999999px;">0</span><div class="b" style="left:1122.6px;top:466.58000000000004px;width:693.8000000000002px;height:1px;background:#efefef;"></div><span class="t" style="top:449.8px;font-size:11px;line-height:15px;color:#5a5a5a;letter-spacing:-0.29px;left:1123.4px;">Sunum/Seminer Hazırlama</span><div class="inp" style="left:1469px;top:447.3px;width:23px;height:18.4px;"></div><span class="t" style="top:450.1px;font-size:10.5px;line-height:15px;color:#3a3a3a;letter-spacing:-0.3px;left:1472.4px;">0</span><div class="inp" style="left:1538.2px;top:447.3px;width:23px;height:18.4px;"></div><span class="t" style="top:450.1px;font-size:10.5px;line-height:15px;color:#3a3a3a;letter-spacing:-0.3px;left:1541.6px;">0</span><div class="b" style="left:1607.5px;top:445.96000000000004px;width:24px;height:20.62px;background:#fefde0;"></div><span class="t" style="top:450.1px;font-size:11px;line-height:15px;color:#8c8c8c;letter-spacing:-0.4px;right:417.5999999999999px;">0</span><div class="b" style="left:1122.6px;top:488.20000000000005px;width:693.8000000000002px;height:1px;background:#efefef;"></div><span class="t" style="top:471.4px;font-size:11px;line-height:15px;color:#5a5a5a;letter-spacing:-0.475px;left:1123.4px;">Ara Sınav ve Ara Sınava Hazırlık</span><div class="inp" style="left:1469px;top:468.9px;width:23px;height:18.4px;"></div><span class="t" style="top:471.7px;font-size:10.5px;line-height:15px;color:#3a3a3a;letter-spacing:-0.3px;left:1472.4px;">1</span><div class="inp" style="left:1538.2px;top:468.9px;width:23px;height:18.4px;"></div><span class="t" style="top:471.7px;font-size:10.5px;line-height:15px;color:#3a3a3a;letter-spacing:-0.3px;left:1541.6px;">2</span><div class="b" style="left:1607.5px;top:467.58000000000004px;width:24px;height:20.62px;background:#fefde0;"></div><span class="t" style="top:471.7px;font-size:11px;line-height:15px;color:#8c8c8c;letter-spacing:-0.4px;right:417.5999999999999px;">2</span><div class="b" style="left:1122.6px;top:509.82000000000005px;width:693.8000000000002px;height:1px;background:#efefef;"></div><span class="t" style="top:493.0px;font-size:11px;line-height:15px;color:#5a5a5a;letter-spacing:-0.416px;left:1123.4px;">Uygulama</span><div class="inp" style="left:1469px;top:490.5px;width:23px;height:18.4px;"></div><span class="t" style="top:493.3px;font-size:10.5px;line-height:15px;color:#3a3a3a;letter-spacing:-0.3px;left:1472.4px;">0</span><div class="inp" style="left:1538.2px;top:490.5px;width:23px;height:18.4px;"></div><span class="t" style="top:493.3px;font-size:10.5px;line-height:15px;color:#3a3a3a;letter-spacing:-0.3px;left:1541.6px;">0</span><div class="b" style="left:1607.5px;top:489.20000000000005px;width:24px;height:20.62px;background:#fefde0;"></div><span class="t" style="top:493.3px;font-size:11px;line-height:15px;color:#8c8c8c;letter-spacing:-0.4px;right:417.5999999999999px;">0</span><div class="b" style="left:1122.6px;top:531.44px;width:693.8000000000002px;height:1px;background:#efefef;"></div><span class="t" style="top:514.6px;font-size:11px;line-height:15px;color:#5a5a5a;letter-spacing:-0.193px;left:1123.4px;">Laboratuvar</span><div class="inp" style="left:1469px;top:512.1px;width:23px;height:18.4px;"></div><span class="t" style="top:514.9px;font-size:10.5px;line-height:15px;color:#3a3a3a;letter-spacing:-0.3px;left:1472.4px;">0</span><div class="inp" style="left:1538.2px;top:512.1px;width:23px;height:18.4px;"></div><span class="t" style="top:514.9px;font-size:10.5px;line-height:15px;color:#3a3a3a;letter-spacing:-0.3px;left:1541.6px;">0</span><div class="b" style="left:1607.5px;top:510.82000000000005px;width:24px;height:20.62px;background:#fefde0;"></div><span class="t" style="top:514.9px;font-size:11px;line-height:15px;color:#8c8c8c;letter-spacing:-0.4px;right:417.5999999999999px;">0</span><div class="b" style="left:1122.6px;top:553.0600000000001px;width:693.8000000000002px;height:1px;background:#efefef;"></div><span class="t" style="top:536.2px;font-size:11px;line-height:15px;color:#5a5a5a;letter-spacing:-0.398px;left:1123.4px;">Proje</span><div class="inp" style="left:1469px;top:533.7px;width:23px;height:18.4px;"></div><span class="t" style="top:536.5px;font-size:10.5px;line-height:15px;color:#3a3a3a;letter-spacing:-0.3px;left:1472.4px;">0</span><div class="inp" style="left:1538.2px;top:533.7px;width:23px;height:18.4px;"></div><span class="t" style="top:536.5px;font-size:10.5px;line-height:15px;color:#3a3a3a;letter-spacing:-0.3px;left:1541.6px;">0</span><div class="b" style="left:1607.5px;top:532.44px;width:24px;height:20.62px;background:#fefde0;"></div><span class="t" style="top:536.5px;font-size:11px;line-height:15px;color:#8c8c8c;letter-spacing:-0.4px;right:417.5999999999999px;">0</span><div class="b" style="left:1122.6px;top:574.6800000000001px;width:693.8000000000002px;height:1px;background:#efefef;"></div><span class="t" style="top:557.9px;font-size:11px;line-height:15px;color:#5a5a5a;letter-spacing:-0.466px;left:1123.4px;">Final Sınavı ve Final Sınavına Hazırlık</span><div class="inp" style="left:1469px;top:555.4px;width:23px;height:18.4px;"></div><span class="t" style="top:558.2px;font-size:10.5px;line-height:15px;color:#3a3a3a;letter-spacing:-0.3px;left:1472.4px;">1</span><div class="inp" style="left:1538.2px;top:555.4px;width:23px;height:18.4px;"></div><span class="t" style="top:558.2px;font-size:10.5px;line-height:15px;color:#3a3a3a;letter-spacing:-0.3px;left:1541.6px;">2</span><div class="b" style="left:1607.5px;top:554.0600000000001px;width:24px;height:20.62px;background:#fefde0;"></div><span class="t" style="top:558.2px;font-size:11px;line-height:15px;color:#8c8c8c;letter-spacing:-0.4px;right:417.5999999999999px;">2</span><div class="b" style="left:1122.6px;top:576.2px;width:693.8000000000002px;height:27px;background:#555257;"></div><span class="t" style="top:585.3px;font-size:11px;line-height:15px;color:#fff;letter-spacing:-0.388px;left:1122.6px;-webkit-text-stroke:0.35px #fff;">Toplam İş Yükü(Saat)</span><span class="t" style="top:585.3px;font-size:11px;line-height:15px;color:#f4f4f4;letter-spacing:-0.4px;left:1450.6px;">60</span><span class="t" style="top:585.3px;font-size:11px;line-height:15px;color:#f4f4f4;left:1483.6px;">/</span><div class="b" style="left:1490.2px;top:580px;width:45.6px;height:22.4px;background:#fff;border-radius:3px;"></div><span class="t" style="top:583.3px;font-size:10.5px;line-height:15px;color:#8c7878;letter-spacing:-0.3px;left:1498.6px;">30</span><svg style="left:1522px;top:591px" width="7" height="4" viewBox="0 0 7 4"><path d="M0 0 H7 L3.5 4Z" fill="#666"/></svg><span class="t" style="top:585.3px;font-size:11px;line-height:15px;color:#f4f4f4;left:1549.6px;">=</span><span class="t" style="top:585.3px;font-size:11px;line-height:15px;color:#f4f4f4;left:1569px;">2</span><span class="t" style="top:612.9px;font-size:11px;line-height:15px;color:#5a5a5a;letter-spacing:-0.49px;left:1122.6px;">Hesaplanan AKTS Kredisi</span><span class="t" style="top:612.9px;font-size:11px;line-height:15px;color:#5a5a5a;letter-spacing:-0.46px;left:1450.6px;">2  ( Dersin AKTS Kredisi : 2  )</span><div class="b" style="left:1122.6px;top:630px;width:693.8000000000002px;height:1px;background:#e2e2e2;"></div><div class="b" style="left:424px;top:653.6px;width:1394.5px;height:30px;background:#f4f5f7;border-bottom:1px solid #e6e7e9;"></div><span class="t" style="top:665.0px;font-size:11px;line-height:15px;color:#555;letter-spacing:-0.394px;left:431.8px;">Ders Kategorisi (Yapısı)</span><span class="t" style="top:693.4px;font-size:11px;line-height:15px;color:#5a5a5a;letter-spacing:-0.168px;left:426.8px;">Matematik ve Temel Bilimler</span><span class="t" style="top:693.4px;font-size:10.5px;line-height:15px;color:#5a5a5a;letter-spacing:-0.5px;left:635.2px;">%</span><div class="inp" style="left:648.2px;top:691.2px;width:28px;height:19.2px;"></div><span class="t" style="top:693.4px;font-size:11px;line-height:15px;color:#5a5a5a;letter-spacing:-0.116px;left:774.4px;">Mühendislik Bilimleri</span><span class="t" style="top:693.4px;font-size:10.5px;line-height:15px;color:#5a5a5a;letter-spacing:-0.5px;left:982.8px;">%</span><div class="inp" style="left:995.8px;top:691.2px;width:28px;height:19.2px;"></div><span class="t" style="top:693.4px;font-size:11px;line-height:15px;color:#5a5a5a;letter-spacing:-0.216px;left:1121.6px;">Mühendislik Tasarımı</span><span class="t" style="top:693.4px;font-size:10.5px;line-height:15px;color:#5a5a5a;letter-spacing:-0.5px;left:1330.0px;">%</span><div class="inp" style="left:1343.0px;top:691.2px;width:28px;height:19.2px;"></div><span class="t" style="top:693.4px;font-size:11px;line-height:15px;color:#5a5a5a;letter-spacing:-0.336px;left:1468.8px;">Sosyal Bilimler</span><span class="t" style="top:693.4px;font-size:10.5px;line-height:15px;color:#5a5a5a;letter-spacing:-0.5px;left:1677.2px;">%</span><div class="inp" style="left:1690.2px;top:691.2px;width:28px;height:19.2px;"></div><span class="t" style="top:719.6px;font-size:11px;line-height:15px;color:#5a5a5a;letter-spacing:-0.189px;left:426.8px;">Eğitim Bilimleri</span><span class="t" style="top:719.6px;font-size:10.5px;line-height:15px;color:#5a5a5a;letter-spacing:-0.5px;left:635.2px;">%</span><div class="inp" style="left:648.2px;top:717.4px;width:28px;height:19.2px;"></div><span class="t" style="top:719.6px;font-size:11px;line-height:15px;color:#5a5a5a;letter-spacing:-0.27px;left:774.4px;">Fen Bilimleri</span><span class="t" style="top:719.6px;font-size:10.5px;line-height:15px;color:#5a5a5a;letter-spacing:-0.5px;left:982.8px;">%</span><div class="inp" style="left:995.8px;top:717.4px;width:28px;height:19.2px;"></div><span class="t" style="top:719.6px;font-size:11px;line-height:15px;color:#5a5a5a;letter-spacing:-0.315px;left:1121.6px;">Sağlık Bilimleri</span><span class="t" style="top:719.6px;font-size:10.5px;line-height:15px;color:#5a5a5a;letter-spacing:-0.5px;left:1330.0px;">%</span><div class="inp" style="left:1343.0px;top:717.4px;width:28px;height:19.2px;"></div><span class="t" style="top:719.6px;font-size:11px;line-height:15px;color:#5a5a5a;letter-spacing:-0.334px;left:1468.8px;">Alan Bilgisi</span><span class="t" style="top:719.6px;font-size:10.5px;line-height:15px;color:#5a5a5a;letter-spacing:-0.5px;left:1677.2px;">%</span><div class="inp" style="left:1690.2px;top:717.4px;width:28px;height:19.2px;"></div><span class="t" style="top:719.9px;font-size:10.5px;line-height:15px;color:#3a3a3a;letter-spacing:-0.2px;left:1693.6px;">100</span><div class="b" style="left:424px;top:736.2px;width:1394.5px;height:6.2px;background:#fcfcfd;border-top:1px solid #e2e3e5;border-bottom:1px solid #e9eaec;"></div><div class="b" style="left:424px;top:742.4px;width:1394.5px;height:28.8px;background:#f4f5f7;border-bottom:1px solid #e6e7e9;"></div><span class="t" style="top:752.9px;font-size:11px;line-height:15px;color:#555;letter-spacing:-0.395px;left:431.8px;">Dersin Kaynakları URL ( Materyal Paylaşımı )</span><span class="t" style="top:781.1px;font-size:11px;line-height:15px;color:#5a5a5a;letter-spacing:-0.231px;left:426.8px;">Dokümanlar</span><div class="inp" style="left:537.2px;top:778.4px;width:310px;height:20px;"></div><span class="t" style="top:781.1px;font-size:11px;line-height:15px;color:#5a5a5a;letter-spacing:-0.276px;left:848.7px;">Ödevler</span><div class="inp" style="left:942.6px;top:778.4px;width:310px;height:20px;"></div><span class="t" style="top:781.1px;font-size:11px;line-height:15px;color:#5a5a5a;letter-spacing:-0.47px;left:1254.2px;">Sınavlar</span><div class="inp" style="left:1348px;top:778.4px;width:311px;height:20px;"></div><div class="b" style="left:1663.4px;top:783.6px;width:10.6px;height:10.6px;background:#fff;border:1px solid #767676;border-radius:2px;"></div><span class="t" style="top:781.7px;font-size:11px;line-height:15px;color:#444;letter-spacing:-0.345px;left:1677.6px;">Dersin Stajı Var</span><div class="b" style="left:426.8px;top:798px;width:1389px;height:28.8px;background:#fff;border:1px solid #c6c6c6;"></div><div class="btn" style="left:428.8px;top:805.6px;width:121px;height:19.6px;"></div><div class="btn" style="left:555.4px;top:805.6px;width:121px;height:19.6px;"></div><div class="btn" style="left:682.2px;top:805.6px;width:121px;height:19.6px;"></div><div class="btn" style="left:809.6px;top:805.6px;width:121px;height:19.6px;"></div><svg style="left:462.4px;top:808.4px" width="13" height="12" viewBox="0 0 13 12"><g fill="none" stroke="#4aa564" stroke-width="1.1" stroke-linejoin="round"><path d="M6.5 0.6 L9.6 5.6 H3.4Z"/><path d="M6.5 3 V8"/><path d="M2.6 6.4 L0.7 9 V11.4 H12.3 V9 L10.4 6.4"/><path d="M0.7 9 H4 L5 10.2 H8 L9 9 H12.3"/></g></svg><span class="t" style="top:807.0px;font-size:11.5px;line-height:16px;color:#808080;letter-spacing:-0.069px;left:478.7px;">Kaydet</span><svg style="left:592px;top:808.6px" width="12" height="12" viewBox="0 0 12 12"><g fill="none" stroke="#8a8a8a" stroke-width="1.1" stroke-linejoin="round"><path d="M3 4.2 V0.6 H7.6 L9 2 V4.2"/><rect x="0.6" y="4.2" width="10.8" height="4.8" rx="1.2"/><path d="M3 7.2 H9 V11.4 H3Z" fill="#f8f8f8"/></g></svg><span class="t" style="top:807.0px;font-size:11.5px;line-height:16px;color:#808080;letter-spacing:-0.115px;left:607.2px;">Yazdır</span><svg style="left:695.6px;top:808.6px" width="12" height="12" viewBox="0 0 12 12"><g fill="none" stroke="#8a8a8a" stroke-width="1.1" stroke-linejoin="round"><path d="M3 4.2 V0.6 H7.6 L9 2 V4.2"/><rect x="0.6" y="4.2" width="10.8" height="4.8" rx="1.2"/><path d="M3 7.2 H9 V11.4 H3Z" fill="#f8f8f8"/></g></svg><span class="t" style="top:807.0px;font-size:11.5px;line-height:16px;color:#808080;letter-spacing:-0.07px;left:710.1px;">Yazdır(İngilizce)</span><svg style="left:837.2px;top:808.6px" width="13" height="12" viewBox="0 0 13 12"><g fill="none" stroke="#8a8a8a" stroke-width="1.1" stroke-linejoin="round"><path d="M8.5 8.5 V11.2 H0.7 V3 H4"/><path d="M8 0.8 L12.2 4.2 L8 7.6 V5.6 C5.6 5.6 4.2 6.4 3.2 8.6 C3.2 5.2 5 3 8 2.8Z"/></g></svg><span class="t" style="top:807.0px;font-size:11.5px;line-height:16px;color:#808080;letter-spacing:0.153px;left:853.1px;">Önizleme</span><div class="btn" style="left:1232.6px;top:803.6px;width:140.6px;height:22px;background:#f7f7f8;"></div><span class="t" style="top:805.4px;font-size:14px;line-height:20px;color:#555;letter-spacing:-0.085px;left:1263.4px;">Ek İşlemler</span><svg style="left:1336px;top:813.6px" width="7" height="4" viewBox="0 0 7 4"><path d="M0 4 H7 L3.5 0Z" fill="#555"/></svg><span class="t" style="top:863.3px;font-size:13.5px;line-height:19px;color:#8f8f8f;letter-spacing:0.222px;left:1660.6px;">www.prolizyazilim.com</span><div class="b" style="left:188px;top:887.2px;width:1640px;height:34px;background:linear-gradient(90deg,#d2e4f0 0%,#d3e3f0 55%,#d7dcee 80%,#d6def0 100%);"></div><div class="b" style="left:231px;top:887.2px;width:243px;height:34px;background:#fff;"></div><svg style="left:202px;top:898px" width="15" height="14" viewBox="0 0 15 14"><path d="M0 2 L6.2 1.1 V6.6 H0Z M7 1 L15 0 V6.6 H7Z M0 7.4 H6.2 V12.9 L0 12Z M7 7.4 H15 V14 L7 13Z" fill="#111"/></svg><svg style="left:240px;top:898px" width="15" height="15" viewBox="0 0 15 15"><circle cx="9" cy="5.8" r="4.6" fill="none" stroke="#333" stroke-width="1.3"/><path d="M5.7 9.2 L0.8 14.2" stroke="#333" stroke-width="1.5"/></svg><span class="t" style="top:895.5px;font-size:13.5px;line-height:19px;color:#444;letter-spacing:-0.2px;left:264px;">Ara</span><svg style="left:488px;top:897.5px" width="16" height="14" viewBox="0 0 16 14"><g fill="none" stroke="#1c1c1c" stroke-width="1.3"><rect x="2.4" y="2.6" width="7.6" height="8.2"/><path d="M0.7 0.4 V13.6 M0.7 2.6 H2.4 M0.7 10.8 H2.4 M10 2.6 H11.6 M10 10.8 H11.6"/><path d="M13.6 0.6 V3.2 M13.6 7.4 V13.4"/></g><circle cx="13.6" cy="5.2" r="1.1" fill="#1c1c1c"/></svg><svg style="left:529.5px;top:896.6px" width="19.5" height="16.5" viewBox="0 1 22 18" preserveAspectRatio="none"><path d="M1 2 H8 L10 4 H21 V8 H1Z" fill="#e9a825"/><path d="M1 5.5 H21 V18 H1Z" fill="#fbd566"/><path d="M1 9 H21 V18 H1Z" fill="#f6c443"/><path d="M6 12 H16 V18 H13.5 V14.5 H8.5 V18 H6Z" fill="#3d8fd6"/></svg><svg style="left:570.6px;top:894.6px" width="20.6" height="20.6" viewBox="0 0 22 22"><circle cx="11" cy="11" r="10.5" fill="#fff"/><path d="M11 0.5 A10.5 10.5 0 0 1 20.1 5.75 L11 5.75 A5.25 5.25 0 0 0 6.45 8.38 L1.9 5.75 A10.5 10.5 0 0 1 11 0.5Z" fill="#ea4335"/><path d="M20.1 5.75 A10.5 10.5 0 0 1 11 21.5 L15.55 13.62 A5.25 5.25 0 0 0 15.55 8.38 L15.55 5.75Z" fill="#fbbc05"/><path d="M11 21.5 A10.5 10.5 0 0 1 1.9 5.75 L6.45 13.62 A5.25 5.25 0 0 0 11 16.25 L13 17.8Z" fill="#34a853"/><path d="M20.1 5.75 H11 A5.25 5.25 0 0 1 15.55 13.62 L11 21.5 A10.5 10.5 0 0 0 20.1 5.75Z" fill="#fbbc05"/><circle cx="11" cy="11" r="5" fill="#fff"/><circle cx="11" cy="11" r="4" fill="#4285f4"/></svg><svg style="left:613.8px;top:895.4px" width="18.6" height="18.6" viewBox="0 0 22 22"><rect x="0.5" y="0.5" width="21" height="21" rx="4" fill="#b30b00"/><path d="M4.5 16.5 C6 13.5 9.5 12.5 12.5 12.5 C15 12.5 17.5 13 17.5 14.3 C17.5 15.6 14.5 15.3 12.5 13.5 C10.5 11.7 9.3 8 9.6 6 C9.8 4.6 11.4 4.6 11.5 6 C11.7 9 8.5 15 6.5 16.8 C5.5 17.7 4 17.5 4.5 16.5Z" fill="none" stroke="#fff" stroke-width="1.4"/></svg><svg style="left:654.5px;top:895px" width="21" height="19" viewBox="0 0 24 22"><path d="M2 2 H15 V11 H2Z" fill="#5b8fd0"/><path d="M3 3 H14 V10 H3Z" fill="#cfe3f6"/><path d="M7 5 H22 V16 H7Z" fill="#3f6fb3"/><path d="M8.2 6.2 H20.8 V14.8 H8.2Z" fill="#a8c8ec"/><path d="M9 8 H19 M9 10.5 H19 M9 13 H16" stroke="#e8f1fb" stroke-width="1"/><path d="M12 16 H17 V18.5 H19.5 V20 H9.5 V18.5 H12Z" fill="#7a8596"/></svg><svg style="left:696px;top:894.5px" width="22" height="21" viewBox="0 0 25 24"><ellipse cx="11" cy="9" rx="10" ry="7.5" fill="#fdf3f3" stroke="#d9868a" stroke-width="1.3" transform="rotate(-12 11 9)"/><circle cx="15.5" cy="18" r="2.6" fill="none" stroke="#3a7bd5" stroke-width="1.5"/><circle cx="21" cy="14" r="2.6" fill="none" stroke="#3a7bd5" stroke-width="1.5"/><path d="M10 4 L16 15.5 M8 9 L19.5 13" stroke="#9aa0a8" stroke-width="1.4"/></svg><svg style="left:738.2px;top:894.6px" width="20.6" height="20.6" viewBox="0 0 22 22"><circle cx="11" cy="11" r="11" fill="#0b5cff"/><text x="11" y="14.6" font-size="10" font-weight="700" fill="#fff" text-anchor="middle" font-family="Liberation Sans, sans-serif" letter-spacing="-0.6">zm</text></svg><div class="b" style="left:522px;top:919.5px;width:34px;height:1.5px;background:#8fc0e8;"></div><div class="b" style="left:564px;top:919.5px;width:34px;height:1.5px;background:#8fc0e8;"></div><div class="b" style="left:606px;top:919.5px;width:34px;height:1.5px;background:#8fc0e8;"></div><div class="b" style="left:731px;top:919.5px;width:34px;height:1.5px;background:#8fc0e8;"></div><svg style="left:1577px;top:900px" width="11" height="7" viewBox="0 0 11 7"><path d="M0.7 6.3 L5.5 1.2 L10.3 6.3" fill="none" stroke="#2b2b2b" stroke-width="1.4"/></svg><svg style="left:1595px;top:899px" width="16" height="10" viewBox="0 0 16 10"><path d="M4 9.3 H12.5 A2.8 2.8 0 0 0 12.8 3.8 A4.2 4.2 0 0 0 5 3 A3.2 3.2 0 0 0 4 9.3Z" fill="#e9edf2" stroke="#2b2b2b" stroke-width="1.1"/></svg><svg style="left:1616px;top:898px" width="15" height="13" viewBox="0 0 15 13"><rect x="2.2" y="3.6" width="11.8" height="7" fill="none" stroke="#2b2b2b" stroke-width="1.2"/><path d="M0.8 5.6 V8.6" stroke="#2b2b2b" stroke-width="1.4"/><path d="M3.6 0.6 V3.2 M2.2 1.6 H5 M3 4.6 V6.6" stroke="#2b2b2b" stroke-width="1"/></svg><svg style="left:1638px;top:898px" width="14" height="13" viewBox="0 0 14 13"><g fill="none" stroke="#2b2b2b" stroke-width="1.1"><path d="M1 12 A11 11 0 0 1 12.5 1.2"/><path d="M4.2 12 A8 8 0 0 1 12.8 4.4"/><path d="M7.4 12 A5 5 0 0 1 13 7.6"/></g><circle cx="11.4" cy="11" r="1.4" fill="#2b2b2b"/></svg><svg style="left:1659px;top:896px" width="10" height="16" viewBox="0 0 10 16"><rect x="3" y="0.5" width="4.4" height="9" rx="2.2" fill="#2b2b2b"/><path d="M1 7 A4.2 4.2 0 0 0 9.4 7 M5.2 11.4 V14.4 M2.8 14.8 H7.6" fill="none" stroke="#2b2b2b" stroke-width="1.2"/></svg><svg style="left:1678px;top:898px" width="16" height="13" viewBox="0 0 16 13"><path d="M0.8 4.4 H3.4 L6.6 1.4 V11.6 L3.4 8.6 H0.8Z" fill="none" stroke="#2b2b2b" stroke-width="1.1" stroke-linejoin="round"/><path d="M8.6 4.4 A3 3 0 0 1 8.6 8.6 M10.6 2.8 A5.2 5.2 0 0 1 10.6 10.2 M12.6 1.2 A7.4 7.4 0 0 1 12.6 11.8" fill="none" stroke="#2b2b2b" stroke-width="1.1"/></svg><span class="t" style="top:890.1px;font-size:10.5px;line-height:15px;color:#222;letter-spacing:-0.5px;left:1410.4px;width:600px;text-align:center;">TUR</span><span class="t" style="top:904.5px;font-size:10.5px;line-height:15px;color:#222;letter-spacing:-0.5px;left:1410.4px;width:600px;text-align:center;">TRF</span><span class="t" style="top:889.9px;font-size:10.5px;line-height:15px;color:#222;letter-spacing:-0.4px;left:1454px;width:600px;text-align:center;">20:08</span><span class="t" style="top:904.5px;font-size:10.5px;line-height:15px;color:#222;letter-spacing:-0.45px;left:1454.4px;width:600px;text-align:center;">16.04.2026</span><svg style="left:1792px;top:897px" width="15" height="15" viewBox="0 0 15 15"><path d="M0.7 0.7 H14.3 V10.6 H10.6 V14 L7.2 10.6 H0.7Z" fill="none" stroke="#2b2b2b" stroke-width="1.2" stroke-linejoin="round"/></svg><svg style="left:1463px;top:157px" width="12" height="19" viewBox="0 0 12 19"><path d="M1 1 V15 L4.3 11.8 L6.7 17.3 L8.9 16.3 L6.5 11 H11Z" fill="#fff" stroke="#222" stroke-width="1.1" stroke-linejoin="round"/></svg><div class="b" style="left:146.5px;top:19.2px;width:55.4px;height:54.6px;background:#1f1f1f;border-radius:11px;"></div><svg style="left:146.5px;top:19.2px" width="55.4" height="54.6" viewBox="146.5 19.2 55.4 54.6"><g stroke="#f0524f" fill="none" stroke-linecap="round"><rect x="167.8" y="29.4" width="11.8" height="20.6" rx="5.9" fill="#f0524f" stroke="none"/><path d="M163.6 46.8 A10.2 10.2 0 0 0 183.8 46.8" stroke-width="2.2"/><path d="M173.7 56.6 V63" stroke-width="2.2"/><path d="M168.8 63.4 H178.8" stroke-width="2.2"/><path d="M192.6 28.6 L156.4 64.8" stroke="#1f1f1f" stroke-width="6"/><path d="M192.6 28.6 L156.4 64.8" stroke-width="2"/></g></svg><div class="b" style="left:231.6px;top:51.6px;width:55.4px;height:117px;background:rgba(27,26,26,.98);"></div><div class="b" style="left:254px;top:68px;width:10px;height:9.6px;background:#f2f2f2;"></div><div class="b" style="left:254px;top:77.6px;width:10px;height:58.8px;background:#1a78d6;"></div><span class="t" style="top:143.1px;font-size:11px;line-height:15px;color:#fff;letter-spacing:-0.2px;left:-40.39999999999998px;width:600px;text-align:center;-webkit-text-stroke:0.3px #fff;">100</span><div class="b" style="left:79.2px;top:655.8px;width:115.2px;height:115px;background:#000;border:4px solid #828282;border-radius:58px;"></div><svg style="left:100px;top:675px" width="75" height="75" viewBox="100 675 75 75"><g transform="translate(115.1,734.9) rotate(-43.5)" fill="#fff" stroke="#fff" stroke-width="1" stroke-linejoin="round"><path d="M0.4 -0.4 L11 -7.3 H43.4 V6.5 H11Z"/><path d="M48.6 -7.3 H53.4 Q56.4 -7.3 56.4 -4.3 V3.5 Q56.4 6.5 53.4 6.5 H48.6Z"/></g></svg><svg style="left:1976px;top:237px" width="28" height="32" viewBox="0 0 28 32"><path d="M27 1.5 V30.5 L1.5 16Z" fill="#767676" stroke="#767676" stroke-width="2" stroke-linejoin="round"/></svg><svg style="left:1970px;top:440px" width="43" height="43" viewBox="0 0 43 43"><circle cx="21.5" cy="21.5" r="19.5" fill="none" stroke="#767676" stroke-width="3"/><circle cx="21.5" cy="21.5" r="14.5" fill="#767676"/></svg><div class="b" style="left:1979px;top:655px;width:27.6px;height:28px;background:#767676;border-radius:2px;"></div></div></body></html>
